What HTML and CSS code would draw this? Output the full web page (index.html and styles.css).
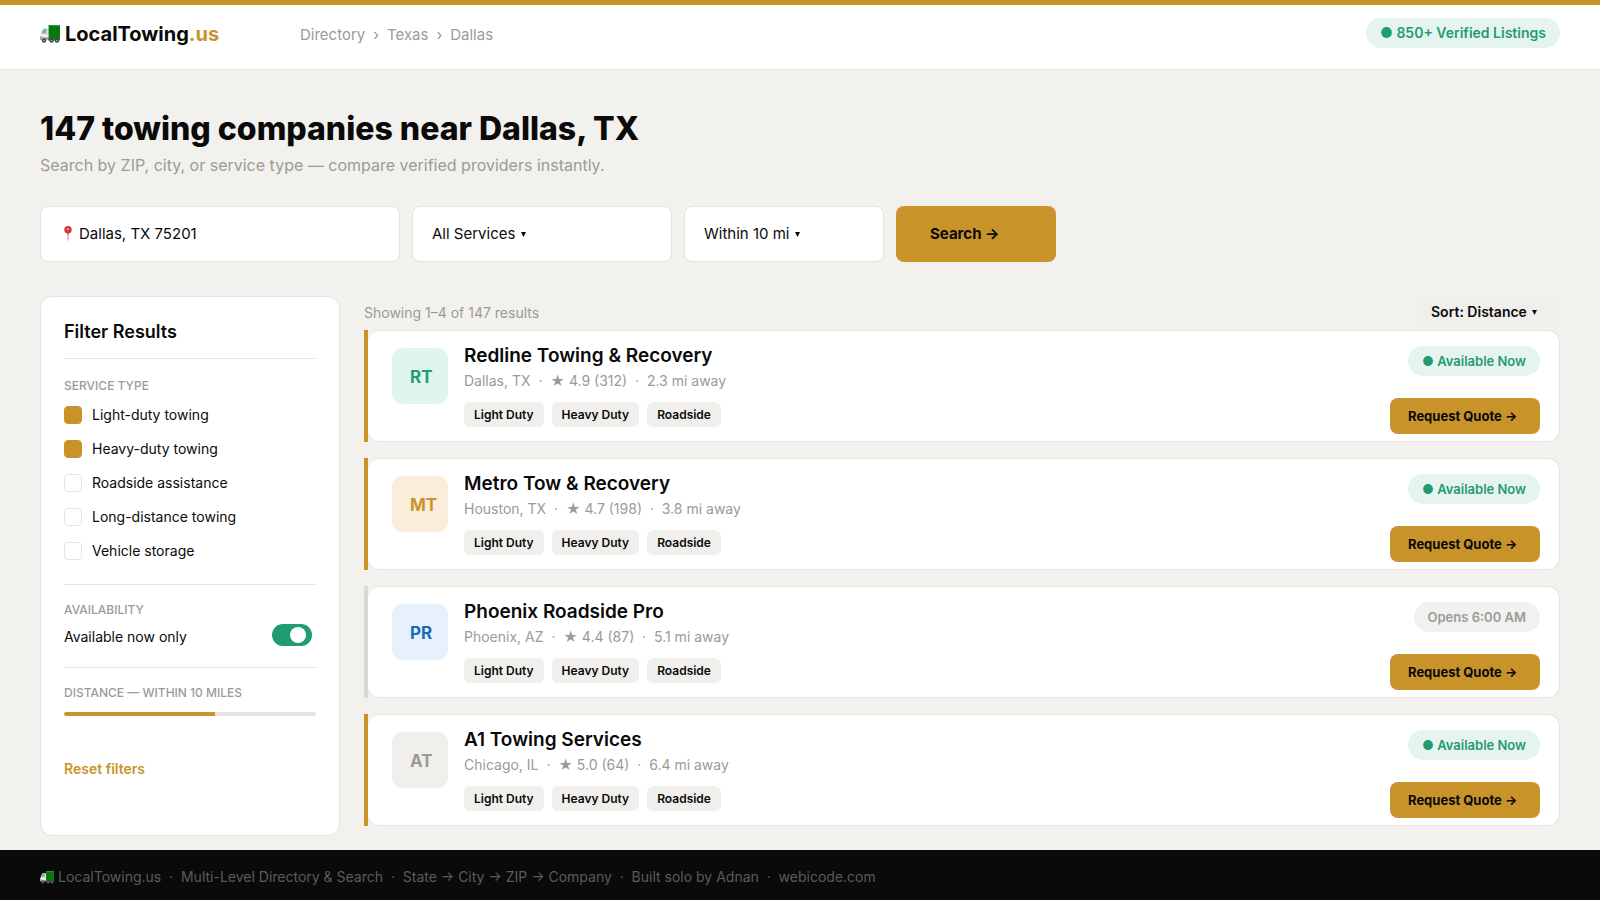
FILE: index.html
```html
<!DOCTYPE html>
<html lang="en">
<head>
<meta charset="utf-8">
<meta name="viewport" content="width=device-width, initial-scale=1">
<title>LocalTowing.us – Towing companies near Dallas, TX</title>
<link rel="stylesheet" href="styles.css">
</head>
<body>
<svg class="sprite" aria-hidden="true">
  <symbol id="truck" viewBox="0 0 20 18">
    <path d="M2.2 5.2 3.6 3H9v11H.6V9.6z" fill="#dfe3e2"/>
    <path d="M2.4 5.6 3.7 4H6.6v4.4H1.4z" fill="#7fb0bd"/>
    <path d="M.4 10h8.4v2.4H.4z" fill="#f1f0ea"/>
    <path d="M0 12.4h9v2.4H0z" fill="#9a9a96"/>
    <path d="M.2 11h1.6v1.4H.2z" fill="#e8a33a"/>
    <path d="M8.6 0H20v14.2H8.6z" fill="#0b7a12"/>
    <path d="M8.6 0H20v1.2H8.6z" fill="#2c9a30"/>
    <path d="M11.5 1.2v13M14.4 1.2v13M17.2 1.2v13" stroke="#066a0c" stroke-width=".5"/>
    <path d="M8 14.2h12v1.2H8z" fill="#555"/>
    <g fill="#3c3c3c"><circle cx="4" cy="15.6" r="2.2"/><circle cx="11.6" cy="15.6" r="2.2"/><circle cx="17" cy="15.6" r="2.2"/></g>
    <g fill="#b4b4b4"><circle cx="4" cy="15.6" r=".9"/><circle cx="11.6" cy="15.6" r=".9"/><circle cx="17" cy="15.6" r=".9"/></g>
  </symbol>
  <symbol id="caret" viewBox="0 0 5 5"><path d="M0 0h5L2.5 5z" fill="#0a0a0a"/></symbol>
</svg>

<header class="header">
  <a class="logo" href="#"><svg class="logo-truck" aria-hidden="true"><use href="#truck"/></svg><span>LocalTowing<span class="logo-tld">.us</span></span></a>
  <nav class="crumbs" aria-label="Breadcrumb">
    <a href="#">Directory</a><span>›</span><a href="#">Texas</a><span>›</span><a href="#">Dallas</a>
  </nav>
  <span class="pill pill-header">● 850+ Verified Listings</span>
</header>

<main class="main">
  <h1 class="title">147 towing companies near Dallas, TX</h1>
  <p class="subtitle">Search by ZIP, city, or service type — compare verified providers instantly.</p>

  <form class="search">
    <label class="field field-place">
      <svg class="pin" viewBox="0 0 8 15" aria-hidden="true"><path d="M3.5 6h1l-.2 8.6h-.6z" fill="#a05a55"/><circle cx="4" cy="3.8" r="3.7" fill="#d0343a"/><circle cx="3.9" cy="3.2" r="1.1" fill="#f0a3a0"/></svg>
      <input class="field-input" type="text" value="Dallas, TX 75201" aria-label="Location">
    </label>
    <label class="field field-service"><select class="select" aria-label="Service"><option>All Services</option></select><svg class="caret" aria-hidden="true"><use href="#caret"/></svg></label>
    <label class="field field-radius"><select class="select" aria-label="Radius"><option>Within 10 mi</option></select><svg class="caret" aria-hidden="true"><use href="#caret"/></svg></label>
    <button class="btn btn-search" type="button">Search →</button>
  </form>

  <div class="layout">
    <aside class="filters">
      <h2 class="filters-title">Filter Results</h2>
      <section class="group">
        <h3 class="group-title">SERVICE TYPE</h3>
        <div class="checks">
          <label class="check"><input type="checkbox" checked>Light-duty towing</label>
          <label class="check"><input type="checkbox" checked>Heavy-duty towing</label>
          <label class="check"><input type="checkbox">Roadside assistance</label>
          <label class="check"><input type="checkbox">Long-distance towing</label>
          <label class="check"><input type="checkbox">Vehicle storage</label>
        </div>
      </section>
      <section class="group">
        <h3 class="group-title">AVAILABILITY</h3>
        <label class="switch">Available now only<input type="checkbox" role="switch" checked></label>
      </section>
      <section class="group">
        <h3 class="group-title"><label for="distance">DISTANCE — WITHIN 10 MILES</label></h3>
        <input class="range" id="distance" type="range" min="0" max="100" value="60">
      </section>
      <button class="reset" type="button">Reset filters</button>
    </aside>

    <section class="results">
      <div class="results-head">
        <p class="count">Showing 1–4 of 147 results</p>
        <label class="sort"><select class="select" aria-label="Sort"><option>Sort: Distance</option></select><svg class="caret" aria-hidden="true"><use href="#caret"/></svg></label>
      </div>

      <article class="card">
        <div class="card-body">
          <div class="avatar avatar-green">RT</div>
          <div class="info">
            <h2 class="name">Redline Towing &amp; Recovery</h2>
            <p class="meta">Dallas, TX &nbsp;·&nbsp; ★ 4.9 (312) &nbsp;·&nbsp; 2.3 mi away</p>
            <div class="tags"><span class="tag">Light Duty</span><span class="tag">Heavy Duty</span><span class="tag">Roadside</span></div>
          </div>
          <div class="side"><span class="pill">● Available Now</span><button class="btn btn-quote" type="button">Request Quote →</button></div>
        </div>
      </article>

      <article class="card">
        <div class="card-body">
          <div class="avatar avatar-gold">MT</div>
          <div class="info">
            <h2 class="name">Metro Tow &amp; Recovery</h2>
            <p class="meta">Houston, TX &nbsp;·&nbsp; ★ 4.7 (198) &nbsp;·&nbsp; 3.8 mi away</p>
            <div class="tags"><span class="tag">Light Duty</span><span class="tag">Heavy Duty</span><span class="tag">Roadside</span></div>
          </div>
          <div class="side"><span class="pill">● Available Now</span><button class="btn btn-quote" type="button">Request Quote →</button></div>
        </div>
      </article>

      <article class="card card-closed">
        <div class="card-body">
          <div class="avatar avatar-blue">PR</div>
          <div class="info">
            <h2 class="name">Phoenix Roadside Pro</h2>
            <p class="meta">Phoenix, AZ &nbsp;·&nbsp; ★ 4.4 (87) &nbsp;·&nbsp; 5.1 mi away</p>
            <div class="tags"><span class="tag">Light Duty</span><span class="tag">Heavy Duty</span><span class="tag">Roadside</span></div>
          </div>
          <div class="side"><span class="pill pill-closed">Opens 6:00 AM</span><button class="btn btn-quote" type="button">Request Quote →</button></div>
        </div>
      </article>

      <article class="card">
        <div class="card-body">
          <div class="avatar avatar-gray">AT</div>
          <div class="info">
            <h2 class="name">A1 Towing Services</h2>
            <p class="meta">Chicago, IL &nbsp;·&nbsp; ★ 5.0 (64) &nbsp;·&nbsp; 6.4 mi away</p>
            <div class="tags"><span class="tag">Light Duty</span><span class="tag">Heavy Duty</span><span class="tag">Roadside</span></div>
          </div>
          <div class="side"><span class="pill">● Available Now</span><button class="btn btn-quote" type="button">Request Quote →</button></div>
        </div>
      </article>
    </section>
  </div>
</main>

<footer class="footer">
  <svg class="footer-truck" aria-hidden="true"><use href="#truck"/></svg>
  <span>LocalTowing.us &nbsp;·&nbsp; Multi-Level Directory &amp; Search &nbsp;·&nbsp; State → City → ZIP → Company &nbsp;·&nbsp; Built solo by Adnan &nbsp;·&nbsp; webicode.com</span>
</footer>
</body>
</html>
```
FILE: styles.css
```css
:root {
  --gold: #c8942a;
  --ink: #0a0a0a;
  --muted: #9b9b96;
  --line: #e5e4e0;
  --page: #f2f1ed;
  --green: #1f9d70;
}

* { box-sizing: border-box; }

body {
  margin: 0;
  min-height: 100vh;
  display: flex;
  flex-direction: column;
  background: var(--page);
  color: var(--ink);
  font-family: Inter, "Liberation Sans", sans-serif;
  font-size: 14px;
  line-height: 20px;
}

h1, h2, h3, p { margin: 0; }
button, input, select { font: inherit; color: inherit; margin: 0; }
a { color: inherit; text-decoration: none; }
.sprite { display: none; }

.header {
  display: flex;
  align-items: center;
  height: 70px;
  padding: 0 40px 6px;
  background: #fff;
  border-top: 5px solid var(--gold);
  border-bottom: 1px solid var(--line);
}
.logo {
  display: flex;
  align-items: center;
  gap: 5px;
  width: 260px;
  font-size: 20px;
  font-weight: 700;
}
.logo-truck { width: 20px; height: 18px; }
.logo-tld { color: var(--gold); }
.crumbs { display: flex; gap: 8px; padding-top: 2px; font-size: 15px; color: var(--muted); }

.pill {
  padding: 5px 14px;
  border-radius: 15px;
  background: #e6f4ef;
  color: var(--green);
  font-size: 13px;
  font-weight: 600;
}
.pill-header { margin: 0 0 2px auto; font-size: 14px; }
.pill-closed { background: #f1f1f0; color: var(--muted); }

.main {
  flex: 1;
  display: flex;
  flex-direction: column;
  padding: 37px 40px 14px;
}
.title { font-size: 32px; line-height: 44px; font-weight: 800; }
.subtitle { margin-top: 2px; font-size: 16px; line-height: 24px; color: var(--muted); }

.search { display: flex; gap: 12px; margin-top: 29px; }
.field {
  display: flex;
  align-items: center;
  height: 56px;
  padding: 0 19px;
  border: 1px solid var(--line);
  border-radius: 8px;
  background: #fff;
  font-size: 15px;
}
.field-place { gap: 7px; width: 360px; padding-left: 23px; }
.field-service { width: 260px; }
.field-radius { width: 200px; }
.field-input { flex: 1; min-width: 0; padding: 0; border: 0; background: none; outline: 0; }
.pin { width: 8px; height: 15px; margin-bottom: 2px; }
.select { appearance: none; padding: 0; border: 0; background: none; }
.caret { width: 5px; height: 5px; margin-left: 5px; }

.btn { border: 0; background: var(--gold); font-weight: 700; text-align: left; }
.btn-search { width: 160px; height: 56px; padding: 0 34px; border-radius: 8px; font-size: 15px; }
.btn-quote { width: 150px; height: 36px; padding: 0 18px; border-radius: 8px; font-size: 13px; }

.layout {
  flex: 1;
  display: grid;
  grid-template-columns: 300px 1fr;
  gap: 24px;
  margin-top: 34px;
}

.filters {
  padding: 22px 23px;
  border: 1px solid var(--line);
  border-radius: 12px;
  background: #fff;
}
.filters-title { padding-bottom: 14px; font-size: 18px; line-height: 25px; font-weight: 600; }
.group { padding: 17px 0; border-top: 1px solid var(--line); }
.group-title { font-size: 12px; line-height: 16px; font-weight: 500; color: var(--muted); }
.filters-title + .group { padding: 19px 0 23px; }
.checks { display: grid; gap: 14px; margin-top: 11px; }
.check { display: flex; align-items: center; gap: 10px; }
.check input {
  appearance: none;
  width: 18px;
  height: 18px;
  border: 1px solid var(--line);
  border-radius: 4px;
  background: #fff;
}
.check input:checked { background: var(--gold); border-color: var(--gold); }
.switch {
  display: flex;
  align-items: flex-start;
  justify-content: space-between;
  margin-top: 6px;
  padding-right: 4px;
  line-height: 26px;
}
.switch input {
  appearance: none;
  display: flex;
  align-items: center;
  width: 40px;
  height: 22px;
  padding: 0 6px;
  border-radius: 11px;
  background: #d5d4d0;
}
.switch input::before { content: ""; width: 16px; height: 16px; border-radius: 50%; background: #fff; }
.switch input:checked { justify-content: flex-end; background: var(--green); }
.range {
  appearance: none;
  display: block;
  width: 100%;
  height: 4px;
  margin-top: 11px;
  border-radius: 2px;
  background: linear-gradient(to right, var(--gold) 60%, var(--line) 60%);
}
.range::-webkit-slider-thumb { appearance: none; width: 0; height: 0; }
.reset { margin-top: 26px; padding: 0; border: 0; background: none; color: var(--gold); font-weight: 600; }

.results { display: flex; flex-direction: column; gap: 16px; }
.results-head { display: flex; justify-content: space-between; height: 18px; color: var(--muted); }
.count { margin-top: 7px; }
.sort {
  display: flex;
  align-items: center;
  width: 144px;
  height: 32px;
  padding: 0 15px;
  border-radius: 16px;
  background: #f0efec;
  color: var(--ink);
  font-weight: 600;
}
.card { padding-left: 4px; background: linear-gradient(to right, var(--gold) 4px, transparent 4px); }
.card-closed { background: linear-gradient(to right, #d9d8d2 4px, transparent 4px); }
.card-body {
  display: flex;
  gap: 16px;
  height: 112px;
  padding: 0 19px 0 24px;
  border: 1px solid var(--line);
  border-left: 0;
  border-radius: 12px;
  background: #fff;
}
.avatar {
  width: 56px;
  height: 56px;
  margin-top: 17px;
  padding-left: 18px;
  border-radius: 10px;
  font-size: 17px;
  line-height: 58px;
  font-weight: 700;
}
.avatar-green { background: #e0f5ee; color: var(--green); }
.avatar-gold { background: #faeedb; color: var(--gold); }
.avatar-blue { background: #e6f1fb; color: #1a6bb5; }
.avatar-gray { background: #f0efec; color: var(--muted); }
.info { flex: 1; padding-top: 13px; }
.name { font-size: 19px; line-height: 24px; font-weight: 600; }
.meta { margin-top: 3px; color: var(--muted); }
.tags { display: flex; gap: 8px; margin-top: 11px; }
.tag {
  padding: 4px 10px;
  border-radius: 6px;
  background: #f0efec;
  font-size: 12px;
  line-height: 17px;
  font-weight: 600;
}
.side { display: flex; flex-direction: column; align-items: flex-end; justify-content: space-between; padding: 15px 0 7px; }

.footer {
  display: flex;
  align-items: center;
  gap: 4px;
  height: 50px;
  padding: 4px 40px 0;
  background: var(--ink);
  color: #5c5c58;
}
.footer-truck { width: 14px; height: 13px; }
```
